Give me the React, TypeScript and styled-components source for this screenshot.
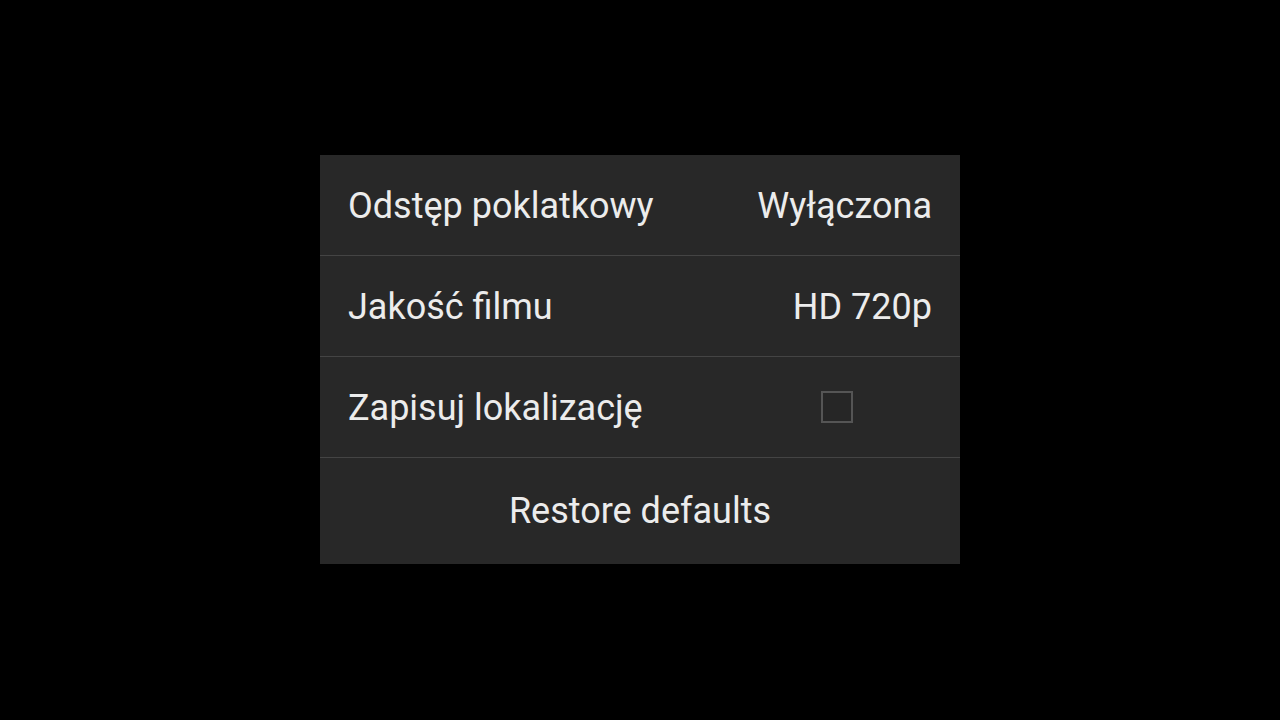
import { FC } from "react";
import styled, { createGlobalStyle } from "styled-components";

const GlobalStyle = createGlobalStyle`
  html, body {
    margin: 0;
    padding: 0;
    background: #000000;
    height: 100%;
  }
  #root {
    height: 100%;
  }
`;

interface SettingRow {
  label: string;
  value?: string;
  checkbox?: boolean;
}

const rows: SettingRow[] = [
  { label: "Odstęp poklatkowy", value: "Wyłączona" },
  { label: "Jakość filmu", value: "HD 720p" },
  { label: "Zapisuj lokalizację", checkbox: true },
];

const App: FC = () => {
  return (
    <>
      <GlobalStyle />
      <Screen>
        <Panel>
          {rows.map((row) => (
            <Row key={row.label}>
              <Label>{row.label}</Label>
              {row.value && <Value>{row.value}</Value>}
              {row.checkbox && (
                <CheckboxSlot>
                  <Checkbox />
                </CheckboxSlot>
              )}
            </Row>
          ))}
          <RestoreButton>Restore defaults</RestoreButton>
        </Panel>
      </Screen>
    </>
  );
};

export default App;

const Screen = styled.div`
  width: 1280px;
  height: 720px;
  display: flex;
  justify-content: center;
  padding-top: 155px;
  box-sizing: border-box;
  font-family: Roboto, "Liberation Sans", sans-serif;
`;

const Panel = styled.div`
  width: 640px;
  height: 409px;
  background: #282828;
  display: flex;
  flex-direction: column;
`;

const Row = styled.div`
  height: 100px;
  flex-shrink: 0;
  display: flex;
  align-items: center;
  justify-content: space-between;
  padding: 0 28px;
  border-bottom: 1px solid #444444;
`;

const Label = styled.span`
  color: #ececec;
  font-size: 36px;
  padding-top: 2px;
`;

const Value = styled.span`
  color: #ececec;
  font-size: 36px;
  padding-top: 2px;
`;

const CheckboxSlot = styled.div`
  width: 111px;
  display: flex;
  align-items: center;
`;

const Checkbox = styled.div`
  width: 32px;
  height: 32px;
  box-sizing: border-box;
  border: 2px solid #555555;
  background: #262626;
`;

const RestoreButton = styled.div`
  flex: 1;
  display: flex;
  align-items: center;
  justify-content: center;
  color: #ececec;
  font-size: 36px;
`;
